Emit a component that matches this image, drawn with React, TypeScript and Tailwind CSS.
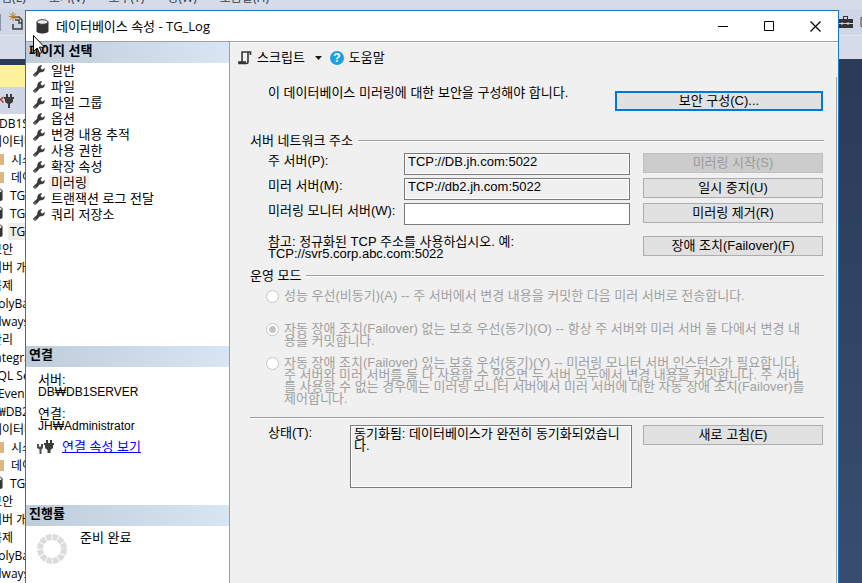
import type { ReactNode } from "react";
import clsx from "clsx";

const pages = ["일반", "파일", "파일 그룹", "옵션", "변경 내용 추적", "사용 권한", "확장 속성", "미러링", "트랜잭션 로그 전달", "쿼리 저장소"];

type TreeRow = { text: string; kind: "server" | "node" | "folder" | "db"; selected?: boolean };

const tree: TreeRow[] = [
  { text: "DB1SERVER", kind: "server" },
  { text: "데이터베이스", kind: "node" },
  { text: "시스템", kind: "folder" },
  { text: "데이터", kind: "folder" },
  { text: "TG_Acc", kind: "db" },
  { text: "TG_Game", kind: "db" },
  { text: "TG_Log", kind: "db", selected: true },
  { text: "보안", kind: "node" },
  { text: "서버 개체", kind: "node" },
  { text: "복제", kind: "node" },
  { text: "PolyBase", kind: "node" },
  { text: "AlwaysOn", kind: "node" },
  { text: "관리", kind: "node" },
  { text: "Integration", kind: "node" },
  { text: "SQL Server", kind: "node" },
  { text: "XEvent", kind: "node" },
  { text: "₩DB2", kind: "server" },
  { text: "데이터베이스", kind: "node" },
  { text: "시스템", kind: "folder" },
  { text: "데이터", kind: "folder" },
  { text: "TG_Log", kind: "db" },
  { text: "보안", kind: "node" },
  { text: "서버 개체", kind: "node" },
  { text: "복제", kind: "node" },
  { text: "PolyBase", kind: "node" },
  { text: "AlwaysOn", kind: "node" },
];

function Cylinder({ className }: { className: string }) {
  return (
    <svg viewBox="0 0 13 15" className={className} aria-hidden="true">
      <path d="M.5 3v9c0 1.500 2.700 2.500 6 2.500s6-1 6-2.500V3z" fill="#333" />
      <ellipse cx="6.500" cy="3" rx="5.500" ry="2.300" fill="#ececec" stroke="#333" />
    </svg>
  );
}

function Wrench() {
  return (
    <svg viewBox="0 0 12 12" className="size-3 shrink-0" aria-hidden="true">
      <path d="M9.300.3 7.700 2.200l.3 1.800 1.900.4L11.700 2.700c.6 2.500-1.100 4.800-3.900 4.600L6.700 7.400 3.200 11.300C1.900 12.600-.7 10.700.6 9L4.200 5.700C3.700 2.300 6.400-.2 9.300.3z" fill="#3a3a3a" />
      <circle cx="2" cy="10" r=".6" fill="#fff" />
    </svg>
  );
}

function Plug({ className }: { className: string }) {
  return (
    <svg viewBox="0 0 10 14" className={className} aria-hidden="true">
      <path d="M2 0h2v3h2V0h2v3h2v2H9v3L6 10v4H4v-4L1 8V5H0V3h2z" fill="#3c3c3c" />
    </svg>
  );
}

/* A short cable end beside a plug, for the connection link. */
function ConnectionIcon() {
  return (
    <svg viewBox="0 0 17 14" className="mr-2 h-3.5 w-[17px]" aria-hidden="true">
      <path d="M0 4h2v2.500h2V4h2v4L4.500 9.500V14h-2V9.500L0 8z" fill="#505050" />
      <path d="M9 0h2v3h2V0h2v3h2v2h-1v3l-2.500 2v3h-3v-3L8 8V5H7V3h2z" fill="#3c3c3c" />
    </svg>
  );
}

function Spinner() {
  return (
    <svg viewBox="0 0 30 30" className="size-[30px] shrink-0" aria-hidden="true">
      <circle cx="15" cy="15" r="12" fill="none" stroke="#dcdcdc" strokeWidth="6" strokeDasharray="5.300 0.983" />
    </svg>
  );
}

function SideHeader({ children }: { children: ReactNode }) {
  return <h2 className="h-[21px] bg-linear-to-r from-[#bfccdb] to-[#d8e5f2] pl-[3px] leading-[17px] font-bold">{children}</h2>;
}

function Rule() {
  return <div className="h-[2px] flex-1 border-t border-[#a0a0a0] bg-white" />;
}

function GroupTitle({ children }: { children: ReactNode }) {
  return (
    <div className="flex items-center gap-[5px]">
      <h3 className="leading-4">{children}</h3>
      <Rule />
    </div>
  );
}

function Button({ children, disabled }: { children: ReactNode; disabled?: boolean }) {
  return (
    <button
      type="button"
      disabled={disabled}
      className="flex h-5 w-[180px] shrink-0 items-center justify-center border border-[#adadad] bg-[#e1e1e1] leading-4 disabled:border-[#bfbfbf] disabled:bg-[#cccccc] disabled:text-[#9a9a9a]"
    >
      {children}
    </button>
  );
}

function AddressRow({ id, label, value, action, disabled }: { id: string; label: string; value?: string; action: string; disabled?: boolean }) {
  return (
    <div className="flex h-[25px] items-start">
      <label htmlFor={id} className="w-[136px] shrink-0 leading-4 whitespace-nowrap">{label}</label>
      <input
        id={id}
        defaultValue={value}
        readOnly={!!value}
        className={clsx("mr-[13px] h-[22px] min-w-0 flex-1 border border-[#7a7a7a] px-[3px] pb-1.5 leading-3.5 outline-1 -outline-offset-2 outline-white", value ? "bg-[#f0f0f0]" : "bg-white")}
      />
      <Button disabled={disabled}>{action}</Button>
    </div>
  );
}

function Mode({ id, checked, children }: { id: string; checked?: boolean; children: ReactNode }) {
  return (
    <div className="flex items-start gap-[5px]">
      <input
        id={id}
        type="radio"
        name="mode"
        disabled
        defaultChecked={checked}
        className="size-[13px] shrink-0 appearance-none rounded-full border border-[#c3c3c3] bg-white checked:bg-[radial-gradient(circle,#c3c3c3_3px,#fff_4px)]"
      />
      <label htmlFor={id} className="leading-3 whitespace-nowrap text-[#a0a0a0]">{children}</label>
    </div>
  );
}

export default function App() {
  return (
    <div className="relative h-screen overflow-hidden bg-[#293955] bg-linear-to-b from-[#293955] to-[#384d70] font-['Liberation_Sans','Noto_Sans_CJK_KR',sans-serif] text-[13px] text-black">
      <div className="flex h-full flex-col" aria-hidden="true">
        <div className="h-[59px] shrink-0 overflow-hidden bg-[#d6dbe9]">
          <div className="-mt-2.5 flex h-[19px] items-start gap-[23px] font-['Noto_Sans','Noto_Sans_CJK_KR',sans-serif] text-xs leading-4 whitespace-nowrap text-[#3a3f4c]">
            <span className="-ml-2.5">편집(E)</span>
            <span>보기(V)</span>
            <span>도구(T)</span>
            <span>창(W)</span>
            <span>도움말(H)</span>
          </div>
          <div className="flex h-[27px] items-center justify-between border-b border-[#e3e8f2] bg-[#cfd6e5]">
            <svg viewBox="0 0 24 20" className="h-5 w-6">
              <path d="M.5 2v17" stroke="#8a93a8" />
              <path d="M12 5h7l3 3v9h-9v-5M15 8h4v3h3" fill="none" stroke="#404040" strokeWidth="1.500" />
              <path d="M13 0v9M9 4.500h9M10 1.500l6 6M16 1.500l-6 6" stroke="#c27d1a" />
            </svg>
            <svg viewBox="0 0 24 14" className="h-3.5 w-6">
              <path d="M5 4V1h5v3h5v9H0V4zM6 4h3V2H6z" fill="#333" fillRule="evenodd" />
              <path d="M0 8.500h15M4 7v3M10 7v3" stroke="#cfd6e5" />
              <path d="M24 2.500h-1v9h1" fill="none" stroke="#404040" />
            </svg>
          </div>
        </div>
        <div className="mt-1.5 min-h-0 w-7 flex-1 overflow-hidden bg-white font-['Open_Sans','Noto_Sans_CJK_KR',sans-serif] text-xs">
          <div className="h-[22px] bg-[#fff29d]" />
          <div className="flex h-[27px] items-center bg-[#cfd6e5]">
            <svg viewBox="0 0 4 14" className="h-3.5 w-1">
              <path d="M0 6 3.500 3M0 5l3.500 3.500" stroke="#b33a2a" strokeWidth="1.500" />
            </svg>
            <Plug className="h-3.5 w-2.5" />
          </div>
          {tree.map((row, i) => (
            <div
              key={i}
              className={clsx(
                "flex h-[18px] items-center whitespace-nowrap",
                row.kind === "server" && "-ml-px",
                row.kind === "node" && "-ml-[9px]",
                row.kind === "folder" && "-ml-[11px] gap-[7px]",
                row.kind === "db" && "-ml-[9px] gap-[5px]",
              )}
            >
              {row.kind === "folder" && <span className="h-[11px] w-[15px] shrink-0 bg-[#dcb67a]" />}
              {row.kind === "db" && <Cylinder className="h-3.5 w-3 shrink-0" />}
              <span className={clsx("leading-[17px]", row.kind === "db" && "pl-0.5", row.selected && "bg-[#ececec]")}>{row.text}</span>
            </div>
          ))}
        </div>
      </div>

      <section className="absolute top-2.5 right-[23px] bottom-0 left-[25px] flex flex-col border border-b-0 border-[#1979ca] bg-[#f0f0f0]">
        <header className="flex h-[31px] shrink-0 items-center border-b border-[#a0a0a0] bg-white pl-2.5 font-['Open_Sans','Noto_Sans_CJK_KR',sans-serif]">
          <Cylinder className="mr-[7px] h-[15px] w-[13px]" />
          <h1 className="flex-1 leading-4">데이터베이스 속성 - TG_Log</h1>
          <div className="flex h-full">
            <button type="button" aria-label="최소화" className="flex w-[46px] items-center justify-center">
              <svg viewBox="0 0 11 11" className="size-[11px]"><path d="M0 5.500h10" stroke="#000" /></svg>
            </button>
            <button type="button" aria-label="최대화" className="flex w-[46px] items-center justify-center">
              <svg viewBox="0 0 11 11" className="size-[11px]"><path d="M.5.5h9v9h-9z" fill="none" stroke="#000" /></svg>
            </button>
            <button type="button" aria-label="닫기" className="flex w-[46px] items-center justify-center">
              <svg viewBox="0 0 11 11" className="size-[11px]"><path d="m.5.5 10 10M10.500.5l-10 10" stroke="#000" strokeWidth="1.200" /></svg>
            </button>
          </div>
        </header>

        <div className="flex min-h-0 flex-1">
          <aside className="w-[204px] shrink-0 border-r border-[#a0a0a0] bg-white">
            <div className="h-[304px]">
              <SideHeader>페이지 선택</SideHeader>
              <ul>
                {pages.map((p) => (
                  <li key={p} className="flex h-4 items-center gap-1 pl-[7px]">
                    <Wrench />
                    <span className={clsx("px-0.5 leading-4", p === "미러링" && "bg-[#f0f0f0]")}>{p}</span>
                  </li>
                ))}
              </ul>
            </div>
            <div className="h-[159px]">
              <SideHeader>연결</SideHeader>
              <dl className="pt-[7px] pl-3 leading-3">
                <dt>서버:</dt>
                <dd className="text-xs leading-3">DB₩DB1SERVER</dd>
                <dt className="pt-2.5">연결:</dt>
                <dd className="text-xs leading-3">JH₩Administrator</dd>
              </dl>
              <div className="flex items-center pt-[7px] pl-[11px]">
                <ConnectionIcon />
                <a href="#connection" className="leading-4 text-[#0000ff] underline">연결 속성 보기</a>
              </div>
            </div>
            <div>
              <SideHeader>진행률</SideHeader>
              <div className="flex items-start gap-[13px] pt-1 pl-[11px]">
                <div className="pt-1"><Spinner /></div>
                <span className="leading-4">준비 완료</span>
              </div>
            </div>
          </aside>

          <main className="flex min-w-0 flex-1 flex-col border-t border-white">
            <div className="flex h-[34px] shrink-0 items-center pb-1 pl-2">
              <button type="button" className="flex items-center">
                <svg viewBox="0 0 14 14" className="mr-[5px] size-3.5">
                  <path d="M4 11V1h8.500v3M10 1v9.500c0 1.200-.5 2-1.500 2H1v-1.500h7" fill="none" stroke="#333" strokeWidth="1.600" />
                </svg>
                <span className="leading-4">스크립트</span>
                <svg viewBox="0 0 7 4" className="ml-2.5 h-1 w-[7px]"><path d="M0 0h7L3.500 4z" fill="#1a1a1a" /></svg>
              </button>
              <button type="button" className="ml-2 flex items-center gap-[5px]">
                <span className="flex size-3.5 items-center justify-center rounded-full bg-[#1ba1e2] text-xs leading-3 font-bold text-white">?</span>
                <span className="leading-4">도움말</span>
              </button>
            </div>

            <div className="mr-px flex-1 border-r border-[#a0a0a0] pr-3 pl-5">
              <div className="flex justify-between pt-2 pr-px pl-[18px]">
                <p className="leading-4 whitespace-nowrap">이 데이터베이스 미러링에 대한 보안을 구성해야 합니다.</p>
                <button type="button" className="mt-1.5 h-5 w-[208px] border-2 border-[#0078d7] bg-[#e1e1e1] leading-4">보안 구성(C)...</button>
              </div>

              <div className="pt-[22px]">
                <GroupTitle>서버 네트워크 주소</GroupTitle>
                <div className="pt-1 pr-px pl-[18px]">
                  <AddressRow id="principal" label="주 서버(P):" value="TCP://DB.jh.com:5022" action="미러링 시작(S)" disabled />
                  <AddressRow id="mirror" label="미러 서버(M):" value="TCP://db2.jh.com:5022" action="일시 중지(U)" />
                  <AddressRow id="witness" label="미러링 모니터 서버(W):" action="미러링 제거(R)" />
                  <div className="flex items-start justify-between pt-2">
                    <p className="leading-3">참고: 정규화된 TCP 주소를 사용하십시오. 예:<br />TCP://svr5.corp.abc.com:5022</p>
                    <Button>장애 조치(Failover)(F)</Button>
                  </div>
                </div>
              </div>

              <div className="pt-2">
                <GroupTitle>운영 모드</GroupTitle>
                <div className="flex flex-col pt-1.5 pl-4">
                  <Mode id="performance">성능 우선(비동기)(A) -- 주 서버에서 변경 내용을 커밋한 다음 미러 서버로 전송합니다.</Mode>
                  <div className="pt-5">
                    <Mode id="safety" checked>자동 장애 조치(Failover) 없는 보호 우선(동기)(O) -- 항상 주 서버와 미러 서버 둘 다에서 변경 내<br />용을 커밋합니다.</Mode>
                  </div>
                  <div className="pt-2.5">
                    <Mode id="failover">
                      자동 장애 조치(Failover) 있는 보호 우선(동기)(Y) -- 미러링 모니터 서버 인스턴스가 필요합니다.<br />
                      주 서버와 미러 서버를 둘 다 사용할 수 있으면 두 서버 모두에서 변경 내용을 커밋합니다. 주 서버<br />
                      를 사용할 수 없는 경우에는 미러링 모니터 서버에서 미러 서버에 대한 자동 장애 조치(Failover)를<br />
                      제어합니다.
                    </Mode>
                  </div>
                </div>
              </div>

              <div className="flex pt-3"><Rule /></div>
              <div className="flex items-start pt-1.5 pr-px pl-[18px]">
                <label htmlFor="status" className="w-[82px] shrink-0 leading-4">상태(T):</label>
                <textarea
                  id="status"
                  readOnly
                  defaultValue={"동기화됨: 데이터베이스가 완전히 동기화되었습니\n다."}
                  className="mr-[11px] h-[63px] min-w-0 flex-1 resize-none overflow-hidden border border-[#7a7a7a] bg-[#f0f0f0] px-[3px] py-0.5 leading-3 whitespace-pre outline-1 -outline-offset-2 outline-white"
                />
                <Button>새로 고침(E)</Button>
              </div>
            </div>
          </main>
        </div>
      </section>

      <svg viewBox="0 0 12 19" className="absolute top-[35px] left-[33px] h-[19px] w-3" aria-hidden="true">
        <path d="M.5.5v16l3.700-3.500 2.400 5.500 2.200-1-2.400-5.300h5.100z" fill="#fff" stroke="#000" />
      </svg>
    </div>
  );
}
